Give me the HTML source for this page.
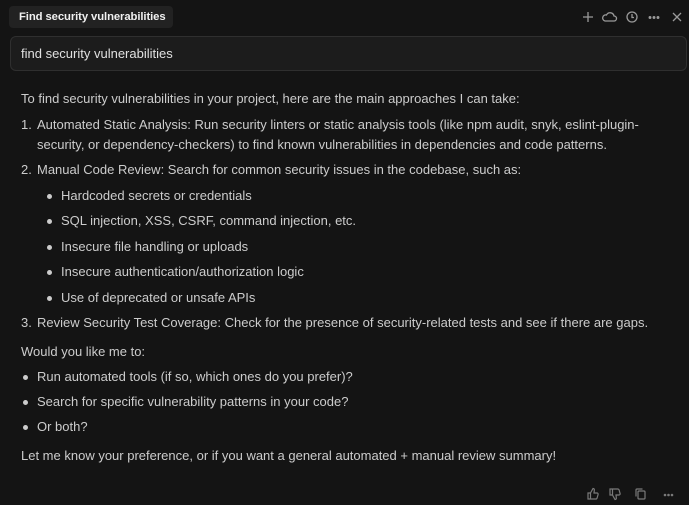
<!DOCTYPE html>
<html><head><style>
body{margin:0;width:689px;height:505px;background:#141414;font-family:"Liberation Sans",sans-serif;color:#cccccc;overflow:hidden;position:relative}
.t{position:absolute;font-size:13px;white-space:nowrap;line-height:16px}
.d{position:absolute;width:5px;height:5px;border-radius:50%;background:#cccccc}
.tab{position:absolute;left:9px;top:6px;width:164px;height:22px;background:#222;border-radius:4px}
.box{position:absolute;left:10px;top:36px;width:675px;height:33px;background:#1c1c1c;border:1px solid #2f2f2f;border-radius:6px}
svg{position:absolute}
</style></head><body>
<div class="tab"></div>
<div class="t" style="left:19px;top:9px;color:#f0f0f0;font-weight:bold;font-size:11.3px;letter-spacing:-0.1px">Find security vulnerabilities</div>
<svg style="left:580px;top:9px" width="105" height="16" viewBox="0 0 105 16" fill="none" stroke="#9a9a9a" stroke-width="1.3">
<path d="M3 8h10M8 3v10"/>
<path d="M25 12h9a2.5 2.5 0 0 0 0-5a4 4 0 0 0-7.5-1a3 3 0 0 0-1.5 6z"/>
<circle cx="52" cy="8" r="5"/><path d="M52 5v3.5h2"/>
<circle cx="70" cy="8.5" r=".8" fill="#9a9a9a"/><circle cx="74" cy="8.5" r=".8" fill="#9a9a9a"/><circle cx="78" cy="8.5" r=".8" fill="#9a9a9a"/>
<path d="M93 4l8 8M101 4l-8 8"/>
</svg>
<div class="box"></div>
<div class="t" style="left:21px;top:46px;color:#e0e0e0">find security vulnerabilities</div>

<div class="t" style="left:21px;top:91px">To find security vulnerabilities in your project, here are the main approaches I can take:</div>
<div class="t" style="left:21px;top:117px">1.</div><div class="t" style="left:37px;top:117px">Automated Static Analysis: Run security linters or static analysis tools (like npm audit, snyk, eslint-plugin-</div>
<div class="t" style="left:37px;top:137px">security, or dependency-checkers) to find known vulnerabilities in dependencies and code patterns.</div>
<div class="t" style="left:21px;top:162px">2.</div><div class="t" style="left:37px;top:162px">Manual Code Review: Search for common security issues in the codebase, such as:</div>
<div class="d" style="left:47px;top:194px"></div><div class="t" style="left:61px;top:188px">Hardcoded secrets or credentials</div>
<div class="d" style="left:47px;top:219px"></div><div class="t" style="left:61px;top:213px">SQL injection, XSS, CSRF, command injection, etc.</div>
<div class="d" style="left:47px;top:245px"></div><div class="t" style="left:61px;top:239px">Insecure file handling or uploads</div>
<div class="d" style="left:47px;top:270px"></div><div class="t" style="left:61px;top:264px">Insecure authentication/authorization logic</div>
<div class="d" style="left:47px;top:296px"></div><div class="t" style="left:61px;top:290px">Use of deprecated or unsafe APIs</div>
<div class="t" style="left:21px;top:315px">3.</div><div class="t" style="left:37px;top:315px">Review Security Test Coverage: Check for the presence of security-related tests and see if there are gaps.</div>
<div class="t" style="left:21px;top:344px">Would you like me to:</div>
<div class="d" style="left:23px;top:375px"></div><div class="t" style="left:37px;top:369px">Run automated tools (if so, which ones do you prefer)?</div>
<div class="d" style="left:23px;top:400px"></div><div class="t" style="left:37px;top:394px">Search for specific vulnerability patterns in your code?</div>
<div class="d" style="left:23px;top:425px"></div><div class="t" style="left:37px;top:419px">Or both?</div>
<div class="t" style="left:21px;top:448px">Let me know your preference, or if you want a general automated + manual review summary!</div>

<svg style="left:585px;top:486px" width="100" height="16" viewBox="0 0 100 16" fill="none" stroke="#7a7a7a" stroke-width="1.2">
<path d="M3 7h2.5v6H3zM5.5 7l2.5-4.5c1.2 0 1.5.8 1.3 2L9 7h3c.8 0 1.3.7 1.1 1.4l-1 3.6c-.2.6-.6 1-1.2 1H5.5"/>
<path d="M25 9h2.5V3H25zM27.5 9l2.5 4.5c1.2 0 1.5-.8 1.3-2L31 9h3c.8 0 1.3-.7 1.1-1.4l-1-3.6c-.2-.6-.6-1-1.2-1H27.5"/>
<rect x="53" y="5" width="7" height="8" rx="1"/><path d="M51 10.5V4a1 1 0 0 1 1-1h5.5"/>
<circle cx="80" cy="9" r=".7" fill="#7a7a7a"/><circle cx="83.5" cy="9" r=".7" fill="#7a7a7a"/><circle cx="87" cy="9" r=".7" fill="#7a7a7a"/>
</svg>
</body></html>
